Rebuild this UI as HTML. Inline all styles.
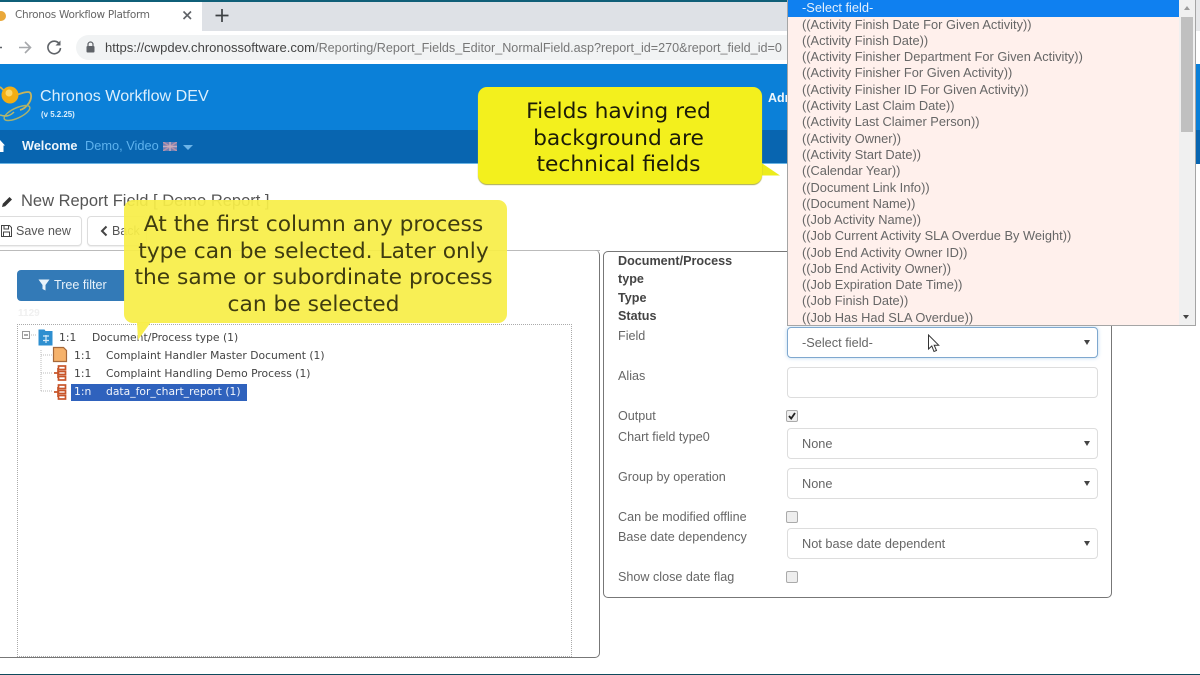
<!DOCTYPE html>
<html><head><meta charset="utf-8"><style>
html,body{margin:0;padding:0;width:1200px;height:675px;overflow:hidden;background:#fff}
body{position:relative;font-family:"Liberation Sans",sans-serif;color:#555;filter:blur(.3px)}
.a,.t{position:absolute}
.t{white-space:nowrap;line-height:1}
.b{position:absolute;border:1px solid #ddd;border-radius:4px;box-sizing:border-box;background:#fff;box-shadow:0 1px 1px #eee}
.tip{position:absolute;font-family:"DejaVu Sans",sans-serif;text-align:center;box-sizing:border-box;border-radius:9px;white-space:nowrap}
.l{font-size:12.6px;color:#666}
.h{font-size:12.6px;font-weight:bold;color:#444}
.tr{font-family:"DejaVu Sans",sans-serif;font-size:10.75px;color:#444}
.o{position:absolute;left:802px;font-size:12.83px;color:#666;white-space:nowrap;line-height:16px}
.sel{position:absolute;left:787px;width:311px;height:31px;border:1px solid #ddd;border-radius:4px;box-sizing:border-box;background:#fff}
.sel span{position:absolute;left:14px;top:8px;font-size:12.75px;color:#666;line-height:14px}
.sel i{position:absolute;right:7px;top:12px;width:0;height:0;border-left:3px solid transparent;border-right:3px solid transparent;border-top:5px solid #444}
.cb{position:absolute;left:786px;width:12px;height:12px;border:1px solid #aaa;border-radius:2px;background:#eee;box-sizing:border-box}
</style></head><body>
<!-- browser chrome -->
<div class="a" style="left:0;top:0;width:1200px;height:2px;background:#0f5f78"></div>
<div class="a" style="left:202px;top:2px;width:600px;height:29px;background:#dee1e6"></div>
<div class="a" style="left:0;top:2px;width:202px;height:29px;background:#fff;border-top-right-radius:7px"></div>
<div class="a" style="left:0;top:31px;width:800px;height:33px;background:#fff"></div>
<div class="a" style="left:76px;top:35px;width:724px;height:25px;background:#f1f3f4;border-radius:13px 0 0 13px"></div>
<svg class="a" style="left:0;top:0" width="300" height="64" viewBox="0 0 300 64">
<circle cx="1" cy="16" r="5" fill="#e9a83a"/>
<path d="M183.500 11.500l7.500 7.500M191 11.500l-7.500 7.500" stroke="#5f6368" stroke-width="1.600" fill="none"/>
<path d="M222 9v13M215.500 15.500h13" stroke="#3c4043" stroke-width="1.700" fill="none"/>
<path d="M0 47.500h2" stroke="#5f6368" stroke-width="1.500" fill="none"/>
<path d="M19 47.500h11M25 42l5.500 5.500-5.500 5.500" stroke="#a6a8ab" stroke-width="1.600" fill="none"/>
<path d="M59.500 44a6.300 6.300 0 1 0 1 4" stroke="#5f6368" stroke-width="1.600" fill="none"/>
<path d="M60.500 40.500v5h-5z" fill="#5f6368"/>
<rect x="86.500" y="46" width="8" height="6.500" rx="1" fill="#5f6368"/>
<path d="M88 46v-1.500a2.500 2.500 0 0 1 5 0v1.500" stroke="#5f6368" stroke-width="1.200" fill="none"/>
</svg>
<div class="t" style="left:15px;top:10px;font-size:10.500px;font-family:'DejaVu Sans',sans-serif;color:#666;letter-spacing:-.3px">Chronos Workflow Platform</div>
<div class="t" style="left:105px;top:41px;font-size:13.050px;color:#777;width:690px;overflow:hidden"><span style="color:#444">https://cwpdev.chronossoftware.com</span><span style="font-size:12.620px">/Reporting/Report_Fields_Editor_NormalField.asp?report_id=270&amp;report_field_id=0</span></div>
<!-- app header -->
<div class="a" style="left:0;top:64px;width:800px;height:66px;background:#0b80d8"></div>
<div class="a" style="left:0;top:130px;width:800px;height:33px;background:#0865b0"></div>
<div class="a" style="left:0;top:163px;width:800px;height:1px;background:#6ab4e4"></div>
<svg class="a" style="left:0;top:78px" width="34" height="46" viewBox="0 0 34 46">
<path d="M0 9c5 4 7 8 12 8 8 0 10-3 16-3 4 0 4 6 1 11-2 3-5 6-9 7" stroke="#c8b45a" stroke-width="1.800" fill="none"/>
<ellipse cx="17" cy="35" rx="14" ry="5" transform="rotate(-25 17 35)" stroke="#a9b26e" stroke-width="1.500" fill="none"/>
<path d="M0 37c6 2 10 1 14-3" stroke="#b6b870" stroke-width="1.500" fill="none"/>
<circle cx="10" cy="17" r="8.500" fill="#f2ae14"/>
<circle cx="9" cy="15" r="3.500" fill="#fbd768"/>
</svg>
<div class="t" style="left:40px;top:88px;font-size:16.100px;color:#dbeefc">Chronos Workflow DEV</div>
<div class="t" style="left:41px;top:111px;font-size:7.900px;color:#dbeefc;font-weight:bold">(v 5.2.25)</div>
<svg class="a" style="left:0;top:139px" width="8" height="14" viewBox="0 0 8 14"><path d="M0 1l5 5.500h-1.500V13H0z" fill="#fff"/></svg>
<div class="t" style="left:22px;top:140px;font-size:12.700px;font-weight:bold;color:#eef6fc">Welcome</div>
<div class="t" style="left:85px;top:140px;font-size:12.800px;color:#5db2ee">Demo, Video</div>
<div class="a" style="left:163px;top:142px;width:14px;height:9px;background:#6f7fb4"></div>
<svg class="a" style="left:163px;top:142px" width="14" height="9"><path d="M0 0l14 9M14 0L0 9" stroke="#b792a8" stroke-width="1.500"/><path d="M7 0v9M0 4.500h14" stroke="#c8adbd" stroke-width="1.500"/></svg>
<div class="a" style="left:183px;top:145px;width:0;height:0;border-left:5px solid transparent;border-right:5px solid transparent;border-top:5px solid #6cb4e8"></div>
<div class="t" style="left:768px;top:92px;font-size:12.500px;font-weight:bold;color:#eef6fc;width:19px;overflow:hidden">Adm</div>
<!-- right side beyond list -->
<div class="a" style="left:1196px;top:0;width:4px;height:64px;background:#e7e8ea"></div>
<div class="a" style="left:1196px;top:31px;width:4px;height:33px;background:#fff"></div>
<div class="a" style="left:1196px;top:64px;width:4px;height:66px;background:#0b80d8"></div>
<div class="a" style="left:1196px;top:130px;width:4px;height:34px;background:#0865b0"></div>
<!-- page title -->
<svg class="a" style="left:1px;top:195px" width="12" height="13" viewBox="0 0 12 13"><path d="M1 12l.8-3.200L8.500 2l2.500 2.500-6.800 6.700z" fill="#333"/></svg>
<div class="t" style="left:21px;top:193px;font-size:16.500px;color:#555">New Report Field [ Demo Report ]</div>
<!-- toolbar -->
<div class="b" style="left:-6px;top:216px;width:88px;height:30px"></div>
<div class="b" style="left:87px;top:216px;width:60px;height:30px"></div>
<svg class="a" style="left:1px;top:225px" width="11" height="12" viewBox="0 0 11 12"><path d="M.5.500h8l2 2v9h-10zM3 .500v3.500h4.500V.500M2.500 11.500V7h6v4.500" stroke="#444" fill="none"/></svg>
<div class="t" style="left:16px;top:225px;font-size:12.500px;color:#555">Save new</div>
<svg class="a" style="left:100px;top:225px" width="8" height="12" viewBox="0 0 8 12"><path d="M6.500 1.500L2 6l4.500 4.500" stroke="#444" stroke-width="2" fill="none"/></svg>
<div class="t" style="left:112px;top:225px;font-size:12.500px;color:#555">Back</div>
<div class="a" style="left:0;top:250px;width:600px;height:1px;background:#bbb"></div>
<!-- left panel -->
<div class="a" style="left:-10px;top:250px;width:610px;height:408px;border:1px solid #777;border-radius:5px;box-sizing:border-box;border-left:0;border-top:0"></div>
<div class="a" style="left:17px;top:270px;width:108px;height:31px;background:#337ab7;border-radius:4px 0 0 4px"></div>
<svg class="a" style="left:38px;top:279px" width="12" height="12" viewBox="0 0 12 12"><path d="M.5.500h11L7.500 6v5.500l-3-1.500V6z" fill="#e8f2fa"/></svg>
<div class="t" style="left:54px;top:279px;font-size:12.600px;color:#e8f2fa">Tree filter</div>
<div class="t" style="left:18px;top:309px;font-size:10px;font-weight:bold;color:#f0f0f0">1129</div>
<div class="a" style="left:17px;top:324px;width:555px;height:333px;border:1px dotted #aaa;box-sizing:border-box"></div>
<!-- tree -->
<svg class="a" style="left:20px;top:328px" width="60" height="76" viewBox="0 0 60 76">
<rect x="2.500" y="3.500" width="7" height="7" fill="#fff" stroke="#999"/><path d="M4 7h4" stroke="#555"/>
<path d="M11 7h6M21 22v42" stroke="#bbb" stroke-dasharray="1 1" fill="none"/>
<path d="M21 45h12M21 63h12M21 27h12" stroke="#bbb" stroke-dasharray="1 1" fill="none"/>
<path d="M18.500 1.500h6l1 1.500h7v14.500h-14z" fill="#2e8fd0"/>
<path d="M23 8h6M23 12.500h6M26 7v8" stroke="#d6eaf8" stroke-width="1.200"/>
<path d="M33.500 19.500h10l3 3v11h-13z" fill="#f6b26b" stroke="#a5683a" stroke-width="1.200"/>
<g fill="none" stroke="#c8552a" stroke-width="1.700"><path d="M34 45h4M38 40v10"/><rect x="38.500" y="38" width="7" height="3.500"/><rect x="38.500" y="43.500" width="7" height="3"/><rect x="38.500" y="48.500" width="7" height="3.500"/></g>
<g fill="none" stroke="#c8552a" stroke-width="1.700"><path d="M34 64h4M38 59v10"/><rect x="38.500" y="57" width="7" height="3.500"/><rect x="38.500" y="62.500" width="7" height="3"/><rect x="38.500" y="67.500" width="7" height="3.500"/></g>
</svg>
<div class="t tr" style="left:59px;top:333px">1:1</div>
<div class="t tr" style="left:92px;top:333px">Document/Process type (1)</div>
<div class="t tr" style="left:74px;top:351px">1:1</div>
<div class="t tr" style="left:106px;top:351px">Complaint Handler Master Document (1)</div>
<div class="t tr" style="left:74px;top:369px">1:1</div>
<div class="t tr" style="left:106px;top:369px">Complaint Handling Demo Process (1)</div>
<div class="a" style="left:71px;top:384px;width:176px;height:17px;background:#2f62bd"></div>
<div class="t tr" style="left:74px;top:387px;color:#f2f5fb">1:n</div>
<div class="t tr" style="left:106px;top:387px;color:#f2f5fb">data_for_chart_report (1)</div>
<!-- right panel -->
<div class="a" style="left:603px;top:251px;width:509px;height:347px;border:1px solid #777;border-radius:5px;box-sizing:border-box"></div>
<div class="t h" style="left:618px;top:255px">Document/Process</div>
<div class="t h" style="left:618px;top:273px">type</div>
<div class="t h" style="left:618px;top:292px">Type</div>
<div class="t h" style="left:618px;top:310px">Status</div>
<div class="t l" style="left:618px;top:330px">Field</div>
<div class="t l" style="left:618px;top:370px">Alias</div>
<div class="t l" style="left:618px;top:410px">Output</div>
<div class="t l" style="left:618px;top:431px">Chart field type0</div>
<div class="t l" style="left:618px;top:471px">Group by operation</div>
<div class="t l" style="left:618px;top:511px">Can be modified offline</div>
<div class="t l" style="left:618px;top:531px">Base date dependency</div>
<div class="t l" style="left:618px;top:571px">Show close date flag</div>
<div class="sel" style="top:327px;border-color:#7fa8cf;box-shadow:0 0 4px #bcd8ef"><span>-Select field-</span><i></i></div>
<div class="sel" style="top:367px"></div>
<div class="sel" style="top:428px"><span>None</span><i></i></div>
<div class="sel" style="top:468px"><span>None</span><i></i></div>
<div class="sel" style="top:528px"><span>Not base date dependent</span><i></i></div>
<div class="cb" style="top:410px"></div>
<svg class="a" style="left:786px;top:410px" width="12" height="12" viewBox="0 0 12 12"><path d="M3 6l2.200 2.500L9 3" stroke="#222" stroke-width="1.800" fill="none"/></svg>
<div class="cb" style="top:511px"></div>
<div class="cb" style="top:571px"></div>
<!-- dropdown -->
<div class="a" style="left:787px;top:0;width:409px;height:326px;background:#fff0ec;border:1px solid #a5a5a5;border-top:0;box-sizing:border-box"></div>
<div class="a" style="left:788px;top:0;width:391px;height:17px;background:#0f80f0"></div>
<div class="a" style="left:1179px;top:0;width:16px;height:325px;background:#f0f0f0"></div>
<div class="a" style="left:1181px;top:17px;width:12px;height:115px;background:#c0c0c0"></div>
<div class="a" style="left:1184px;top:6px;width:0;height:0;border-left:3.500px solid transparent;border-right:3.500px solid transparent;border-bottom:4px solid #9a9a9a"></div>
<div class="a" style="left:1183px;top:315px;width:0;height:0;border-left:3.500px solid transparent;border-right:3.500px solid transparent;border-top:4px solid #444"></div>
<div class="o" style="top:0;color:#e4f0fd">-Select field-</div>
<div class="o" style="top:17px">((Activity Finish Date For Given Activity))</div>
<div class="o" style="top:33px">((Activity Finish Date))</div>
<div class="o" style="top:49px">((Activity Finisher Department For Given Activity))</div>
<div class="o" style="top:65px">((Activity Finisher For Given Activity))</div>
<div class="o" style="top:82px">((Activity Finisher ID For Given Activity))</div>
<div class="o" style="top:98px">((Activity Last Claim Date))</div>
<div class="o" style="top:114px">((Activity Last Claimer Person))</div>
<div class="o" style="top:131px">((Activity Owner))</div>
<div class="o" style="top:147px">((Activity Start Date))</div>
<div class="o" style="top:163px">((Calendar Year))</div>
<div class="o" style="top:180px">((Document Link Info))</div>
<div class="o" style="top:196px">((Document Name))</div>
<div class="o" style="top:212px">((Job Activity Name))</div>
<div class="o" style="top:228px">((Job Current Activity SLA Overdue By Weight))</div>
<div class="o" style="top:245px">((Job End Activity Owner ID))</div>
<div class="o" style="top:261px">((Job End Activity Owner))</div>
<div class="o" style="top:277px">((Job Expiration Date Time))</div>
<div class="o" style="top:293px">((Job Finish Date))</div>
<div class="o" style="top:310px;height:15px;overflow:hidden">((Job Has Had SLA Overdue))</div>
<!-- cursor -->
<svg class="a" style="left:927px;top:334px" width="14" height="20" viewBox="0 0 14 20"><path d="M1.500 1v14l3.300-3 2.200 5.500 2.500-1-2.300-5.300h4.500z" fill="#fff" stroke="#333" stroke-width="1"/></svg>
<!-- red tip callout -->
<svg class="a" style="left:755px;top:160px" width="30" height="24"><path d="M5 2l20 13.500H5z" fill="#ecec1c"/></svg>
<div class="tip" style="left:478px;top:87px;width:284px;height:97px;background:#f3f01d;box-shadow:0 1px 1px #a9a94a;color:#1c1c08;font-size:21.750px;line-height:26.500px;padding:12px 3px 0 0">Fields having red<br>background are<br>technical fields</div>
<!-- yellow translucent callout -->
<svg class="a" style="left:132px;top:322px" width="22" height="20"><path d="M5 0h14L6 18z" fill="#f8ee50"/></svg>
<div class="tip" style="left:124px;top:200px;width:383px;height:123px;background:rgba(247,238,72,.93);color:#3f3c10;font-size:21.750px;line-height:26.500px;padding:12px 4px 0 0">At the first column any process<br>type can be selected. Later only<br>the same or subordinate process<br>can be selected</div>
<!-- bottom -->
<div class="a" style="left:0;top:674px;width:1200px;height:1px;background:#0f4a5c"></div>
</body></html>
